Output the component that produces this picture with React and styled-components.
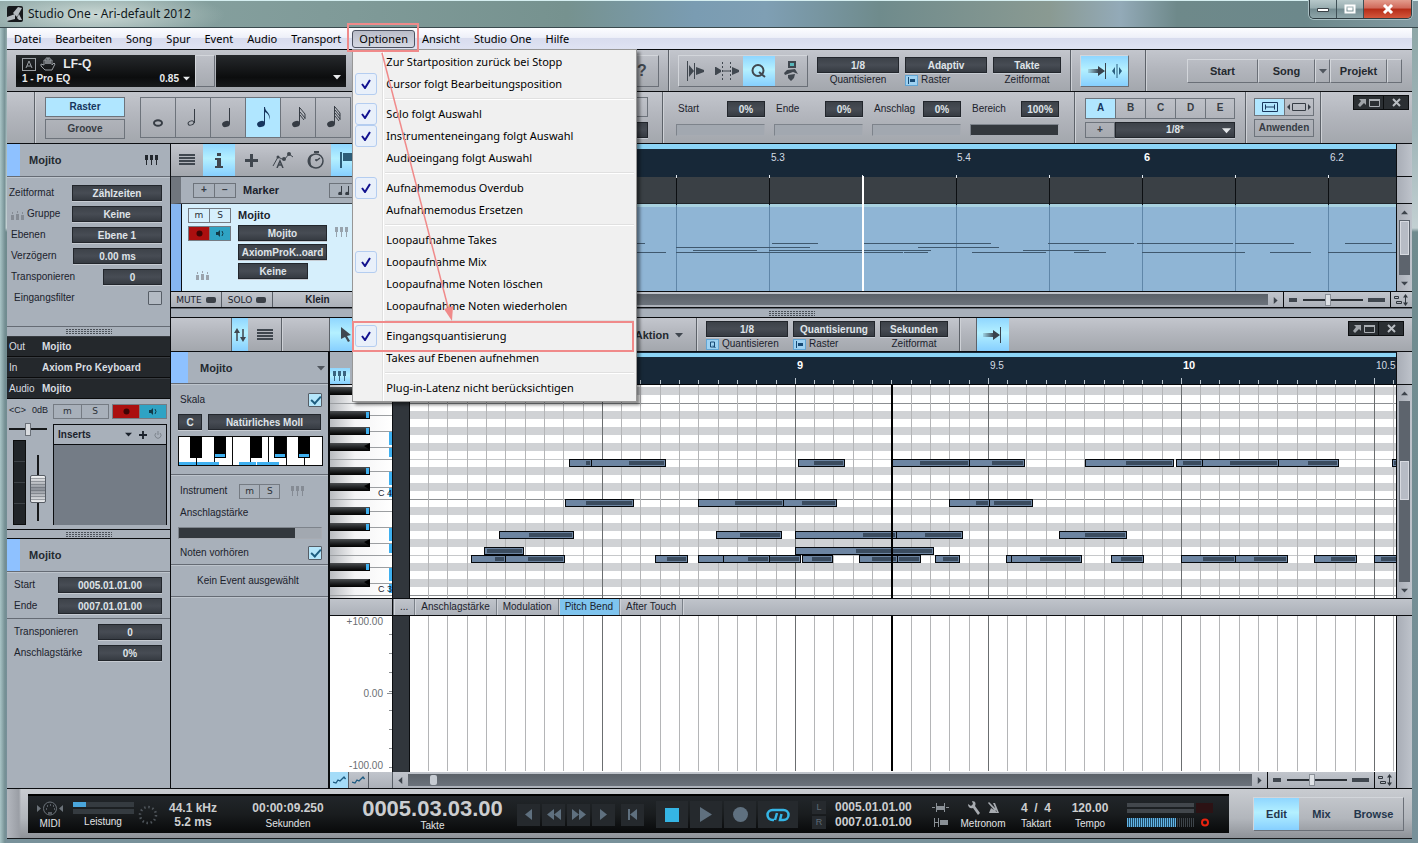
import React, { useState } from "react";
import styled, { createGlobalStyle, css } from "styled-components";

const GlobalStyle = createGlobalStyle`
  * {
    box-sizing: border-box;
  }

  body {
    margin: 0;
    background: #6f8a8e;
    font-family: "Liberation Sans", Arial, sans-serif;
    font-size: 10px;
    line-height: 12px;
    color: #1b222c;
  }

  button, input, select {
    font: inherit;
    color: inherit;
    margin: 0;
    padding: 0;
    border: 0;
    border-radius: 0;
    background: none;
  }

  svg {
    display: block;
    flex: none;
  }
`;

/* ---------- shared looks ---------- */

const metal = css`
  background: linear-gradient(#c3c6cd, #b3b6bd 45%, #a3a7ad);
`;

const raised = css`
  border: 1px solid;
  border-color: #d3d6db #6a6f77 #6a6f77 #d3d6db;
`;

const active = css`
  background: linear-gradient(#8fd6ff, #b4f0ff 45%, #86cfff);
`;

const darkBox = css`
  height: 16px;
  border: 1px solid #22262c;
  background: linear-gradient(#3d4249, #474c54 50%, #363b42);
  box-shadow: 0 1px 0 #c6cbd2;
  color: #dfe3e8;
  font-weight: bold;
  text-align: center;
  text-align-last: center;
`;

/* ---------- window ---------- */

const Window = styled.div`
  min-height: 100vh;
  display: flex;
  flex-direction: column;
  padding: 0 6px 4px 7px;
  border-radius: 6px 6px 0 0;
  background:
    linear-gradient(90deg, #a9c4c6 0, #748f93 5px, transparent 6px),
    linear-gradient(#8aa3a3 0, #9fb5b8 130px, #c3d0d2 228px, #6f8b8e 232px, #78919a 100%);
`;

const TitleBar = styled.header`
  height: 28px;
  display: flex;
  align-items: center;
  gap: 5px;
  margin: 0 -6px 0 -7px;
  padding-left: 7px;
  border-top: 1px solid #d5eef0;
  border-bottom: 1px solid #3a4a4e;
  background:
    radial-gradient(ellipse 130px 26px at 95px 14px, rgba(214, 226, 222, 0.85), transparent),
    linear-gradient(90deg, #8ba5a4 0, #7f9a98 25%, #76928f 40%, #7a9cb2 49%, #7f9fb4 54%, #6f8b8c 62%, #8a9a92 74%, #93aab8 79%, #6e898a 83%, #6c888b 92%, #8199a0 100%);
`;

const WindowTitle = styled.h1`
  margin: 0;
  font: 12px/16px "Noto Sans", "Open Sans", sans-serif;
  color: #10181c;
`;

const CaptionButtons = styled.div`
  display: flex;
  align-self: flex-start;
  margin: -1px 6px 0 auto;
  border: 1px solid #2f3d42;
  border-top: 0;
  border-radius: 0 0 5px 5px;
  overflow: hidden;
  box-shadow: 0 0 0 1px #a9bfc3;
`;

const CaptionButton = styled.button`
  width: ${({ $close }) => ($close ? "47px" : "27px")};
  height: 18px;
  display: flex;
  align-items: center;
  justify-content: center;
  border-right: ${({ $close }) => ($close ? "0" : "1px solid #3f5056")};
  background: ${({ $close }) =>
    $close ? "linear-gradient(#e39c8d, #d0695a 45%, #b52c17 50%, #d4573c)" : "linear-gradient(#b7c8ca, #98adb0 45%, #738b90 50%, #8ea5a9)"};
`;

const MenuBar = styled.nav`
  height: 22px;
  display: flex;
  align-items: center;
  border-bottom: 1px solid #0b0d10;
  background: linear-gradient(#fcfdff, #eef0f9 45%, #d8dcee 50%, #dfe3f3);
`;

const MenuEntry = styled.div`
  position: relative;
  margin-left: ${({ $open }) => ($open ? "4px" : "0")};
`;

const MenuButton = styled.button`
  height: 18px;
  padding: 0 6px;
  border: 1px solid ${({ $open }) => ($open ? "#4c5160" : "transparent")};
  border-radius: 3px;
  background: ${({ $open }) => ($open ? "linear-gradient(#b9bcc8, #d5d8e3)" : "none")};
  font: 11px/15px "Noto Sans", "Open Sans", sans-serif;
  color: #000;
`;

const Highlight = styled.span`
  position: absolute;
  z-index: 7;
  inset: ${({ $inset }) => $inset};
  border: 2px solid #f08a8a;
  pointer-events: none;
`;

const Dropdown = styled.ul`
  position: absolute;
  z-index: 5;
  top: 19px;
  left: 0;
  width: 285px;
  margin: 0;
  padding: 1px 2px 2px;
  list-style: none;
  border: 1px solid #979797;
  background: linear-gradient(90deg, #f1f1f1 29px, #e0e0e0 29px, #e0e0e0 30px, #fff 30px, #fff 31px, #f0f0f0 31px);
  box-shadow: 3px 3px 3px rgba(0, 0, 0, 0.45);
`;

const DropdownRow = styled.li`
  position: relative;
`;

const DropdownItem = styled.button`
  width: 100%;
  height: 22px;
  display: flex;
  align-items: center;
  gap: 9px;
  font: 11px/16px "Noto Sans", "Open Sans", sans-serif;
  color: #000;
  text-align: left;
  white-space: nowrap;
`;

const CheckCell = styled.span`
  width: 22px;
  height: 22px;
  display: flex;
  align-items: center;
  justify-content: center;
  border: 1px solid ${({ $on }) => ($on ? "#b4cdf0" : "transparent")};
  border-radius: 3px;
  background: ${({ $on }) => ($on ? "#e9f0fa" : "none")};
`;

const DropdownRule = styled.li`
  height: 8px;
  margin-left: 30px;
  background: linear-gradient(transparent 3px, #e0e0e0 3px, #e0e0e0 4px, #fff 4px, #fff 5px, transparent 5px);
`;

const Arrow = styled.svg`
  position: absolute;
  z-index: 6;
  top: 3px;
  left: 26px;
  pointer-events: none;
`;

/* ---------- toolbars ---------- */

const Toolbar = styled.div`
  display: flex;
  height: ${({ $height }) => $height};
  border-bottom: 1px solid #0b0d10;
  ${metal}
`;

const Section = styled.div`
  display: flex;
  flex: none;
  align-items: center;
  gap: ${({ $gap }) => $gap || "0"};
  width: ${({ $width }) => $width || "auto"};
  padding: ${({ $padding }) => $padding || "0 9px"};
  border-right: 1px solid #5d6269;
  box-shadow: 1px 0 0 #ced1d6;
  color: #3f464e;
`;

const Push = styled.div`
  display: flex;
  align-items: ${({ $top }) => ($top ? "flex-start" : "center")};
  margin-left: auto;
  padding: ${({ $padding }) => $padding || "0"};
`;

const PluginDisplay = styled.div`
  width: ${({ $width }) => $width};
  height: 32px;
  display: flex;
  flex-direction: column;
  justify-content: space-between;
  padding: 2px 5px 2px 6px;
  background: linear-gradient(#26292c, #0c0d0e 70%, #17191b);
  color: #e8eaec;
  font-weight: bold;
`;

const PluginLine = styled.div`
  display: flex;
  align-items: center;
  gap: 4px;
  height: ${({ $tall }) => ($tall ? "15px" : "12px")};
  font-size: ${({ $tall }) => ($tall ? "12px" : "10px")};
  justify-content: ${({ $spread }) => ($spread ? "space-between" : "flex-start")};
`;

const PluginGap = styled.div`
  width: 20px;
  height: 32px;
  margin-right: 1px;
  ${raised}
`;

const ButtonGroup = styled.div`
  display: flex;
  flex: none;
  margin-right: ${({ $space }) => $space || "0"};
  ${raised}
`;

const ToolButton = styled.button`
  width: ${({ $width }) => $width || "32px"};
  height: ${({ $height }) => $height || "30px"};
  flex: none;
  display: flex;
  align-items: center;
  justify-content: center;
  gap: 4px;
  color: #40474f;
  font-size: 16px;
  font-weight: bold;
  ${({ $on }) => $on && active}
`;

const PageButton = styled.button`
  width: ${({ $width }) => $width};
  height: 24px;
  display: flex;
  align-items: center;
  justify-content: center;
  font-size: 11px;
  font-weight: bold;
  color: #24292f;
  ${raised}

  svg {
    color: #50565e;
  }
`;

const FlatButton = styled.button`
  width: ${({ $width }) => $width};
  height: ${({ $height }) => $height || "20px"};
  display: flex;
  align-items: center;
  justify-content: center;
  border: 1px solid #6d737b;
  margin-right: ${({ $joined }) => ($joined ? "-1px" : "0")};
  font-weight: bold;
  color: ${({ $on }) => ($on ? "#17365e" : "#363c44")};
  background: ${({ $on }) => ($on ? "#b0e6ff" : "transparent")};
`;

const Column = styled.div`
  display: flex;
  flex-direction: column;
  gap: ${({ $gap }) => $gap || "0"};
  padding-top: ${({ $top }) => $top || "0"};
  color: #1b222c;
  ${({ $grow }) => $grow && "flex: 1; min-width: 0;"}
`;

const Row = styled.div`
  display: flex;
  align-items: center;
  gap: ${({ $gap }) => $gap || "0"};
`;

const ValueSelect = styled.select`
  ${darkBox}
  appearance: none;
  width: ${({ $width }) => $width || "90px"};
  line-height: 13px;
`;

const ValueInput = styled.input`
  ${darkBox}
  width: ${({ $width }) => $width};
`;

const SelectWithArrow = styled.div`
  position: relative;
  color: #e4e7ea;

  svg {
    position: absolute;
    top: 4px;
    right: 4px;
    pointer-events: none;
  }
`;

const BoxCaption = styled.label`
  height: 14px;
  display: flex;
  align-items: center;
  justify-content: ${({ $icon }) => ($icon ? "flex-start" : "center")};
  gap: 3px;
`;

const Bar = styled.div`
  width: ${({ $width }) => $width};
  height: 12px;
  border: 1px solid;
  border-color: #7d838b #a7abb2 #a7abb2 #7d838b;
  background: linear-gradient(90deg, #33383d ${({ $fill }) => $fill}, #a2a8b0 ${({ $fill }) => $fill});
`;

const DarkButtons = styled.div`
  display: flex;
  height: 15px;
  border: 1px solid #0c0e10;
  background: #2b2f33;

  button {
    width: 29px;
    display: flex;
    align-items: center;
    justify-content: center;
  }

  button + button {
    width: 25px;
    border-left: 1px solid #0c0e10;
  }
`;

/* ---------- panels ---------- */

const Body = styled.main`
  flex: 1;
  display: flex;
  border-bottom: 1px solid #0b0d10;
  background: #a8b0ba;
`;

const Inspector = styled.aside`
  width: 164px;
  flex: none;
  border-right: 1px solid #0b0d10;
`;

const PanelHead = styled.div`
  height: ${({ $height }) => $height || "33px"};
  display: flex;
  align-items: center;
  padding-right: ${({ $pad }) => $pad || "11px"};
  border-bottom: 1px solid #656b74;
  box-shadow: 0 1px 0 #bdc4cc;
  color: #50565e;

  &::before {
    content: "";
    align-self: stretch;
    width: ${({ $mark }) => $mark || "13px"};
    margin-right: ${({ $mark }) => ($mark ? "12px" : "9px")};
    background: #8ec1ff;
  }

  svg {
    margin-left: auto;
  }
`;

const PanelTitle = styled.h2`
  margin: 0;
  font-size: 11px;
  line-height: 14px;
  color: #23292f;
`;

const FieldList = styled.div`
  display: flex;
  flex-direction: column;
  gap: 5px;
  padding: ${({ $padding }) => $padding};
  border-bottom: ${({ $line }) => ($line ? "1px solid #656b74" : "0")};
`;

const Field = styled.label`
  min-height: 16px;
  display: flex;
  align-items: center;
  justify-content: space-between;
  padding-left: ${({ $indent }) => $indent || "0"};

  span {
    display: flex;
    align-items: flex-end;
    gap: 3px;
  }
`;

const Check = styled.input`
  appearance: none;
  width: 14px;
  height: 14px;
  border: 1px solid #565d66;
  border-radius: 1px;
  background: #b3bac3;

  &:checked {
    background: #b5e6fb;
  }

  &:checked::before {
    content: "";
    display: block;
    width: 8px;
    height: 4px;
    margin: 2px 0 0 2px;
    border: solid #1d5d80;
    border-width: 0 0 2px 2px;
    transform: rotate(-48deg);
  }
`;

const Grip = styled.div`
  height: 10px;
  display: flex;
  align-items: center;
  justify-content: center;
  border-top: 1px solid ${({ $soft }) => ($soft ? "#656b74" : "#0b0d10")};
  border-bottom: ${({ $line }) => ($line ? "1px solid #0b0d10" : "0")};

  &::before {
    content: "";
    width: 47px;
    height: 5px;
    background: conic-gradient(#4b5159 25%, transparent 0) 0 0 / 3px 2px;
  }
`;

const Route = styled.div`
  height: 21px;
  display: flex;
  align-items: center;
  padding-left: 2px;
  border-bottom: 1px solid #0a0b0c;
  border-top: 1px solid #373b40;
  background: #24282c;
  color: #d9dde1;

  span {
    width: 33px;
  }
`;

const Channel = styled.div`
  display: flex;
  gap: 4px;
  height: 130px;
  padding: 5px 3px 4px 2px;
`;

const Strip = styled.div`
  width: 40px;
  font-size: 9px;
  display: flex;
  flex-direction: column;
`;

const StripFader = styled.div`
  flex: 1;
  display: flex;
  justify-content: space-between;
  padding: 2px 1px 0 4px;
`;

const Meter = styled.div`
  width: 13px;
  border: 1px solid #0c0d0e;
  background: repeating-linear-gradient(#202428 0, #202428 20px, #3d4247 20px, #3d4247 21px);
`;

const PanSlider = styled.input`
  appearance: none;
  width: 38px;
  height: 14px;
  margin: 6px 0 2px;
  background: linear-gradient(transparent 6px, #17191b 6px, #17191b 8px, transparent 8px);

  &::-webkit-slider-thumb {
    appearance: none;
    width: 6px;
    height: 13px;
    border: 1px solid #6b7179;
    background: #d9dce0;
  }
`;

const VolumeSlider = styled.input`
  appearance: none;
  writing-mode: vertical-lr;
  direction: rtl;
  width: 16px;
  height: 66px;
  margin: 15px 2px 0 0;
  background: linear-gradient(90deg, transparent 7px, #17191b 7px, #17191b 9px, transparent 9px);

  &::-webkit-slider-thumb {
    appearance: none;
    width: 16px;
    height: 28px;
    border: 1px solid #565c64;
    border-radius: 2px;
    background: repeating-linear-gradient(transparent 0, transparent 2px, rgba(90, 96, 104, 0.5) 2px, rgba(90, 96, 104, 0.5) 3px),
      linear-gradient(#f2f3f4, #8b9098 50%, #e9ebed);
  }
`;

const Inserts = styled.div`
  flex: 1;
  border: 1px solid #0b0d10;
  border-bottom: 0;
  background: #747c86;
`;

const InsertsHead = styled.div`
  height: 20px;
  display: flex;
  align-items: center;
  gap: 7px;
  padding: 0 4px;
  border-bottom: 1px solid #0b0d10;
  background: #a8b0ba;
  font-weight: bold;

  b {
    flex: 1;
  }
`;

const PairButton = styled.button`
  width: ${({ $width }) => $width || "22px"};
  height: 15px;
  display: flex;
  align-items: center;
  justify-content: center;
  border: 1px solid #757b83;
  margin-right: -1px;
  font: 9px/11px "DejaVu Sans", sans-serif;
  color: #2b3036;
  background: ${({ $tone }) => $tone || "transparent"};
`;

/* ---------- arrangement ---------- */

const Workspace = styled.div`
  flex: 1;
  min-width: 0;
  display: flex;
  flex-direction: column;
`;

const Arrange = styled.section`
  display: flex;
  height: 148px;
  border-bottom: 1px solid #0b0d10;
`;

const TrackList = styled.div`
  width: 230px;
  flex: none;
  overflow: hidden;
  border-right: 1px solid #0b0d10;
`;

const TrackTools = styled.div`
  height: 33px;
  display: flex;
  border-bottom: 1px solid #3d434a;
  ${metal}
`;

const MarkerRow = styled.div`
  height: 27px;
  display: flex;
  align-items: center;
  padding-left: 12px;
  border-left: 10px solid #70767e;
  border-bottom: 1px solid #3d434a;

  b {
    width: 86px;
    margin-left: 7px;
    font-size: 11px;
  }
`;

const Track = styled.div`
  height: 88px;
  display: flex;
  gap: 8px;
  padding: 4px 0 0 7px;
  border-left: 10px solid #86b6f2;
  background: #d6effc;
  box-shadow: inset 1px 0 0 #0b0d10;
`;

const TrackName = styled.b`
  font-size: 11px;
  line-height: 14px;
`;

const Lane = styled.div`
  flex: 1;
  min-width: 0;
  overflow: hidden;
`;

const ScrollColumn = styled.div`
  width: 16px;
  flex: none;
  display: flex;
  flex-direction: column;
  border-left: 1px solid #0b0d10;
  background: linear-gradient(90deg, #a8adb6, #bec3cb);
`;

const ScrollCap = styled.div`
  height: ${({ $height }) => $height};
  border-bottom: 1px solid #0b0d10;
`;

const ScrollArrow = styled.button`
  width: 15px;
  height: 16px;
  flex: none;
  display: flex;
  align-items: center;
  justify-content: center;
  color: #3d444c;
`;

const VTrack = styled.div`
  flex: 1;
  margin: 0 2px;
  padding: ${({ $offset }) => $offset || "1px"} 1px 0;
  background: #5d646d;

  &::before {
    content: "";
    display: block;
    height: ${({ $size }) => $size};
    border: 1px solid #d7dae0;
    background: #b7bcc5;
  }
`;

const StatusRow = styled.div`
  height: 16px;
  display: flex;
  align-items: stretch;
  flex: none;
  border-bottom: ${({ $last }) => ($last ? "0" : "1px solid #0b0d10")};
  background: linear-gradient(#c1c5cc, #abb0b8);
`;

const StatusButton = styled.button`
  width: ${({ $width }) => $width};
  display: flex;
  align-items: center;
  justify-content: center;
  gap: 4px;
  border-right: 1px solid #585e66;
  font: ${({ $bold }) => ($bold ? 'bold 10px/12px "Liberation Sans"' : '9px/12px "DejaVu Sans"')}, sans-serif;
  background: ${({ $on }) => ($on ? "#a5dcf8" : "none")};
`;

const Led = styled.i`
  width: 10px;
  height: 6px;
  border-radius: 2px;
  background: #3c4148;
`;

const HTrack = styled.div`
  flex: 1;
  margin: 2px 0;
  padding: 1px 0 1px ${({ $offset }) => $offset || "0"};
  background: linear-gradient(#5b6168, #6b727b);

  &::before {
    content: "";
    display: block;
    width: ${({ $thumb }) => $thumb || "0"};
    height: 100%;
    border-radius: 2px;
    background: #c6cbd2;
  }
`;

const ZoomBox = styled.div`
  width: 108px;
  display: flex;
  align-items: center;
  justify-content: space-between;
  padding: 0 5px;
  border: solid #0b0d10;
  border-width: 0 1px;

  i {
    width: 8px;
    height: 4px;
    background: #40474f;
  }

  i:last-child {
    width: 17px;
  }
`;

const ZoomSlider = styled.input`
  appearance: none;
  width: 60px;
  height: 14px;
  background: linear-gradient(transparent 6px, #2b3036 6px, #2b3036 8px, transparent 8px);

  &::-webkit-slider-thumb {
    appearance: none;
    width: 6px;
    height: 12px;
    border: 1px solid #8a9098;
    background: #dfe2e6;
  }
`;

const RowIcon = styled.div`
  width: ${({ $width }) => $width || "21px"};
  display: flex;
  align-items: center;
  justify-content: center;
`;

/* ---------- editor ---------- */

const Editor = styled.section`
  flex: 1;
  display: flex;
`;

const ScalePanel = styled.div`
  width: 159px;
  flex: none;
  border-right: 2px solid #0b0d10;
`;

const PanelBlock = styled.div`
  display: flex;
  flex-direction: column;
  gap: 6px;
  padding: ${({ $padding }) => $padding};
  border-bottom: 1px solid #656b74;
  box-shadow: 0 1px 0 #bdc4cc;
`;

const EditorGrid = styled.div`
  flex: 1;
  min-width: 0;
  display: flex;
  flex-direction: column;
`;

const EditorRow = styled.div`
  display: flex;
  flex: ${({ $grow }) => ($grow ? "1" : "none")};
  background: ${({ $grow }) => ($grow ? "#fff" : "none")};
`;

const KeyColumn = styled.div`
  width: 63px;
  flex: none;
  display: flex;
  align-items: flex-end;
  border-right: 1px solid #0b0d10;
  border-bottom: ${({ $line }) => ($line ? "1px solid #0b0d10" : "0")};
`;

const DarkStrip = styled.div`
  width: 17px;
  flex: none;
  background: #31363c;
  border-right: 1px solid #0b0d10;
`;

const Scale = styled.div`
  flex: 1;
  align-self: stretch;
  display: flex;
  flex-direction: column;
  justify-content: space-between;
  padding: 0 9px 0 0;
  color: #6b6f73;
  text-align: right;
  background: linear-gradient(#8a8d90, #8a8d90) right 77px / 5px 1px no-repeat,
    repeating-linear-gradient(transparent 0, transparent 18px, #8a8d90 18px, #8a8d90 19px) right top / 3px 100% no-repeat;
`;

const Tabs = styled.div`
  height: 18px;
  display: flex;
  border: solid #0b0d10;
  border-width: 1px 0;
  background: linear-gradient(#c0c4cb, #acb1b9);
`;

const Tab = styled.button`
  padding: 0 6px;
  border-left: 1px solid #7b8189;
  box-shadow: inset 1px 0 0 #cfd2d8;
  background: ${({ $on }) => ($on ? "#7fc4ee" : "none")};
`;

/* ---------- transport ---------- */

const Transport = styled.footer`
  height: 50px;
  display: flex;
  align-items: center;
  padding: 0 8px 0 21px;
  border-bottom: 1px solid #16191c;
  background: linear-gradient(90deg, #b3b7be, #9a9ea5 12px, transparent 14px), linear-gradient(#c9ccd1, #b2b6bc 60%, #8e9298);
`;

const TransportDisplay = styled.div`
  height: 39px;
  flex: none;
  display: grid;
  grid-template-columns: 36px 70px 20px 70px 120px 169px 139px 155px 109px 41px 44px 62px 46px 114px;
  align-items: center;
  padding: 0 2px 0 4px;
  border-top: 2px solid #000;
  background: linear-gradient(#22262a, #191c1e 50%, #08090a);
  color: #e2e4e6;
`;

const Cell = styled.div`
  display: flex;
  flex-direction: column;
  align-items: ${({ $start }) => ($start ? "flex-start" : "center")};
  gap: ${({ $gap }) => $gap || "3px"};
  padding-left: ${({ $start }) => $start || "0"};
`;

const Reading = styled.strong`
  font-size: ${({ $size }) => $size || "12px"};
  line-height: ${({ $size }) => ($size ? "20px" : "14px")};
  color: #ccced0;
  white-space: nowrap;
`;

const Caption = styled.span`
  line-height: 11px;
`;

const Load = styled.div`
  width: 61px;
  height: 5px;
  background: linear-gradient(90deg, #4aa6dc ${({ $fill }) => $fill}, #353b40 ${({ $fill }) => $fill});
`;

const TransportButtons = styled.div`
  display: flex;
  gap: 2px;
`;

const TransportButton = styled.button`
  width: ${({ $width }) => $width || "23px"};
  height: ${({ $width }) => ($width ? "27px" : "22px")};
  margin-left: ${({ $apart }) => ($apart ? "4px" : "0")};
  display: flex;
  align-items: center;
  justify-content: center;
  background: #25292d;
  color: ${({ $on }) => ($on ? "#35b5e5" : "#5f707f")};
`;

const LocatorMark = styled.span`
  width: 14px;
  height: 13px;
  text-align: center;
  background: #262a2e;
  color: #5f6b76;
  font-size: 9px;
`;

const ViewButton = styled.button`
  width: ${({ $width }) => $width};
  height: 32px;
  font-size: 11px;
  font-weight: bold;
  color: #24364c;
  ${({ $on }) => $on && active}
`;

/* ---------- icons ---------- */

const Svg = ({ w, h = w, children, ...rest }) => (
  <svg width={w} height={h} viewBox={`0 0 ${w} ${h}`} fill="currentColor" aria-hidden="true" {...rest}>
    {children}
  </svg>
);

const Triangle = ({ dir = "down", size = 8 }) => {
  const turn = { down: 0, left: 90, up: 180, right: 270 }[dir];
  return (
    <Svg w={size}>
      <path d={`M0 ${size / 4}H${size}L${size / 2} ${size * 0.8}z`} transform={`rotate(${turn} ${size / 2} ${size / 2})`} />
    </Svg>
  );
};

const KeysIcon = ({ color = "#23282e" }) => (
  <Svg w={14} h={11} color={color}>
    <path d="M0 0h3v5h-1v5h-1v-5h-1zM5 0h3v5h-1v5h-1v-5h-1zM10 0h3v5h-1v5h-1v-5h-1z" />
  </Svg>
);

const GroupIcon = ({ color = "#858b94" }) => (
  <Svg w={13} h={9} color={color}>
    <path d="M0 4h3v5H0zM5 3h3v6H5zM10 4h3v5h-3zM1 1h1v2H1zM6 0h1v2H6zM11 1h1v2h-1z" />
  </Svg>
);

const ListIcon = () => (
  <Svg w={16} h={12}>
    <path d="M0 0h16v2H0zM0 3h16v2H0zM0 6h16v2H0zM0 9h16v2H0z" />
  </Svg>
);

const PlusIcon = ({ size = 13 }) => (
  <Svg w={size} viewBox="0 0 13 13">
    <path d="M5 0h3v5h5v3H8v5H5V8H0V5h5z" />
  </Svg>
);

const SpeakerIcon = () => (
  <Svg w={11} h={9} color="#123a48">
    <path d="M1 3h2l2-2v7L3 6H1z" />
    <path d="M7 2q2 2.500 0 5" fill="none" stroke="currentColor" />
  </Svg>
);

const RecordDot = ({ color = "#3e0505" }) => (
  <Svg w={7} color={color}>
    <circle cx="3.500" cy="3.500" r="3" />
  </Svg>
);

const SnapArrow = () => (
  <Svg w={20} h={18} color="#39424c">
    <defs>
      <linearGradient id="fade">
        <stop offset="0" stopColor="#39424c" stopOpacity="0.15" />
        <stop offset="1" stopColor="#39424c" />
      </linearGradient>
    </defs>
    <rect x="0" y="7" width="11" height="4" fill="url(#fade)" />
    <path d="M10 4l7 5-7 5zM17 1h1v16h-1z" />
  </Svg>
);

const SplitIcon = () => (
  <Svg w={10} h={16} color="#2b5f80">
    <path d="M4.500 1h1v14h-1zM0 8l3-4v8zM10 8L7 4v8z" />
  </Svg>
);

const SnapIcon = ({ q }) => (
  <Svg w={13} h={11}>
    <rect width="13" height="11" fill="#62a5d4" />
    <rect x="1" y="1" width="11" height="9" fill="#9fd2f2" />
    {q ? (
      <path d="M4.500 3h4v5h-4zM7 6.500l2.500 2.500" fill="none" stroke="#184a74" />
    ) : (
      <path d="M3 2h1v7H3zM5 4h5v3H5z" fill="#184a74" />
    )}
  </Svg>
);

const noteShapes = [
  <ellipse key="a" cx="9" cy="20" rx="4" ry="2.800" fill="none" stroke="currentColor" strokeWidth="2" />,
  <g key="b">
    <ellipse cx="7" cy="20" rx="3" ry="2" fill="none" stroke="currentColor" transform="rotate(-20 7 20)" />
    <path d="M10 6h1v14h-1z" />
  </g>,
  <g key="c">
    <ellipse cx="7" cy="21" rx="4" ry="3" transform="rotate(-20 7 21)" />
    <path d="M10 5h1v16h-1z" />
  </g>,
  <g key="d">
    <ellipse cx="7" cy="21" rx="4" ry="3" transform="rotate(-20 7 21)" />
    <path d="M10 4h1c0 5 7 6 4 13 1-5-2-7-4-8v12h-1z" />
  </g>,
  <g key="e">
    <ellipse cx="7" cy="21" rx="4" ry="3" transform="rotate(-20 7 21)" />
    <path d="M10 4h1v17h-1z" />
    <path d="M11 5l5 6v5M11 9l5 6M11 12l4 5" fill="none" stroke="currentColor" />
  </g>,
  <g key="f">
    <ellipse cx="7" cy="21" rx="4" ry="3" transform="rotate(-20 7 21)" />
    <path d="M10 3h1v18h-1z" />
    <path d="M11 4l5 6v7M11 7l5 6M11 10l5 6M11 13l4 5" fill="none" stroke="currentColor" />
  </g>,
];

const noteNames = ["1/1", "1/2", "1/4", "1/8", "1/16", "1/32"];

const LayersIcon = () => (
  <Svg w={15} h={12} color="#30363d">
    <path d="M.5 2.500h4v2h-4zM2.500 7.500h5v2h-5z" fill="none" stroke="currentColor" />
    <path d="M11 3h1v6h-1zM11.500 0l2.500 3.500H9zM11.500 12L9 8.500h5z" />
  </Svg>
);

const CurveIcon = () => (
  <Svg w={13} h={8}>
    <path d="M0 6l3 1 2-3 2 1 4-4 1.500 2" fill="none" stroke="#1d5a80" strokeWidth="1.300" />
  </Svg>
);

/* ---------- data ---------- */

const menus = ["Datei", "Bearbeiten", "Song", "Spur", "Event", "Audio", "Transport", "Optionen", "Ansicht", "Studio One", "Hilfe"];

const optionGroups = [
  [["Zur Startposition zurück bei Stopp"], ["Cursor folgt Bearbeitungsposition", true]],
  [["Solo folgt Auswahl", true], ["Instrumenteneingang folgt Auswahl", true], ["Audioeingang folgt Auswahl"]],
  [["Aufnahmemodus Overdub", true], ["Aufnahmemodus Ersetzen"]],
  [["Loopaufnahme Takes"], ["Loopaufnahme Mix", true], ["Loopaufnahme Noten löschen"], ["Loopaufnahme Noten wiederholen"]],
  [["Eingangsquantisierung", true], ["Takes auf Ebenen aufnehmen"]],
  [["Plug-in-Latenz nicht berücksichtigen"]],
];

// x of the first visible pixel of the two time axes
const ARRANGE_START = 401;
const ROLL_START = 410;

const arrangeNotes = {
  99: [[600, 645], [772, 818], [863, 991], [1048, 1134], [1137, 1233], [1235, 1294], [1345, 1392]],
  103: [[676, 810], [918, 999]],
  106: [[693, 757], [769, 931], [1023, 1089]],
  108: [[600, 666], [676, 903], [904, 928], [972, 1046], [1074, 1106], [1142, 1245], [1270, 1311], [1328, 1396]],
};

const arrangeLabels = [["5.3", 771], ["5.4", 957], ["6", 1144, true], ["6.2", 1330]];

// row top: [start, end, where the dark velocity bar begins]
const rollNotes = {
  74: [
    [569, 592, 586], [591, 666, 629], [798, 845, 814], [892, 970, 920], [969, 1025, 992], [1085, 1174, 1126],
    [1176, 1203, 1183], [1202, 1279, 1230], [1278, 1339, 1308], [1392, 1400, 1394],
  ],
  114: [[565, 634, 586], [698, 784, 735], [783, 837, 802], [949, 990, 976], [989, 1033, 994]],
  146: [[499, 574, 529], [716, 782, 740], [795, 897, 863], [896, 963, 925], [1059, 1127, 1085]],
  162: [[484, 524, 487], [795, 934, 856]],
  170: [
    [471, 506, 495], [505, 565, 528], [655, 688, 667], [698, 724, 724], [723, 770, 748], [769, 801, 770], [802, 833, 812],
    [859, 898, 872], [897, 921, 899], [935, 960, 943], [1006, 1012, 1012], [1011, 1082, 1040], [1111, 1144, 1121],
    [1181, 1236, 1203], [1235, 1288, 1254], [1314, 1357, 1331], [1374, 1400, 1381],
  ],
};

const C_ROWS = [18, 114, 210, 306];
const blackOffsets = [-16, -32, -56, -72, -88];

/* ---------- pieces ---------- */

const Labelled = ({ id, caption, value, width, icon }) => (
  <Column $top="3px">
    <ValueSelect id={id} $width={width}>
      <option>{value}</option>
    </ValueSelect>
    <BoxCaption htmlFor={id} $icon={!!icon}>
      {icon}
      {caption}
    </BoxCaption>
  </Column>
);

const WindowControls = () => (
  <DarkButtons>
    <button aria-label="Fenster lösen">
      <Svg w={24} h={10} color="#a9adb2">
        <path d="M2 1h7v6L7 5 3 9 1 7l3-4z" fill="#a0a4a9" />
        <path d="M12.500 1.500h10v7h-10z" fill="none" stroke="currentColor" />
        <path d="M12 1h11v2H12z" />
      </Svg>
    </button>
    <button aria-label="Schließen">
      <Svg w={9}>
        <path d="M1 1l7 7M8 1l-7 7" stroke="#b9bdc2" strokeWidth="2" />
      </Svg>
    </button>
  </DarkButtons>
);

const Zoom = ({ value }) => (
  <ZoomBox>
    <i />
    <ZoomSlider type="range" aria-label="Zoom" defaultValue={value} />
    <i />
  </ZoomBox>
);

const Timeline = () => {
  const lines = Array.from({ length: 24 }, (_, i) => Math.round(303.5 + i * 93.15));
  return (
    <svg width="100%" height="147" shapeRendering="crispEdges" fontFamily="Liberation Sans, Arial, sans-serif">
      <rect width="100%" height="147" fill="#8fb5d5" />
      <rect width="100%" height="33" fill="#172838" />
      <rect width="100%" height="5" fill="#8cd4f6" />
      <rect y="33" width="100%" height="27" fill="#3a4045" />
      <rect y="59" width="100%" height="1" fill="#20262b" />
      <rect y="60" width="100%" height="3" fill="#a9d2e0" />
      {lines.map((x) => {
        const left = x - ARRANGE_START;
        return (
          <g key={x}>
            <rect x={left} y="31" width="1" height="3" fill="#e6eef4" />
            <rect x={left} y="34" width="1" height="27" fill="#0c0f12" />
            <rect x={left} y="61" width="1" height="86" fill="#5f86a8" />
          </g>
        );
      })}
      {Object.entries(arrangeNotes).map(([y, notes]) =>
        notes.map(([a, b]) => <rect key={a + y} x={a - ARRANGE_START} y={y} width={b - a} height="1" fill="#3f586e" />)
      )}
      <rect x={862 - ARRANGE_START} y="32" width="2" height="115" fill="#fff" />
      {arrangeLabels.map(([text, x, bold]) => (
        <text key={text} x={x - ARRANGE_START} y="17" fill={bold ? "#fff" : "#d5dde4"} fontSize={bold ? 11 : 10} fontWeight={bold ? "bold" : "normal"}>
          {text}
        </text>
      ))}
    </svg>
  );
};

const gridLines = Array.from({ length: 110 }, (_, i) => ({ x: Math.floor(428.6 + i * 19.3) - ROLL_START, bar: i % 10 === 9 }));

const rulerLabels = [["9", 797, true], ["9.5", 990], ["10", 1183, true], ["10.5", 1376]];

const RollRuler = () => (
  <svg width="100%" height="33" shapeRendering="crispEdges" fontFamily="Liberation Sans, Arial, sans-serif">
    <rect width="100%" height="33" fill="#172838" />
    <rect y="1" width="100%" height="4" fill="#8cd4f6" />
    <rect y="32" width="100%" height="1" fill="#05070a" />
    {gridLines.map(({ x, bar }) => (
      <rect key={x} x={x} y={bar ? 26 : 28} width="1" height={bar ? 6 : 4} fill="#b9c4cc" />
    ))}
    {rulerLabels.map(([text, x, bold]) => (
      <text key={text} x={x - ROLL_START} y="17" fill={bold ? "#fff" : "#d5dde4"} fontSize={bold ? 11 : 10} fontWeight={bold ? "bold" : "normal"}>
        {text}
      </text>
    ))}
  </svg>
);

const GridLines = ({ height }) => (
  <>
    {gridLines.map(({ x, bar }) => (
      <rect key={x} x={x} width="1" height={height} fill={bar ? "#6b6e70" : "#b4b5b7"} />
    ))}
  </>
);

const PianoRoll = () => (
  <svg width="100%" height="213" shapeRendering="crispEdges">
    <rect width="100%" height="213" fill="#fff" />
    {C_ROWS.map((c) => blackOffsets.map((o) => <rect key={c + o} y={c + o} width="100%" height="8" fill="#d0d2d5" />))}
    {C_ROWS.map((c) => (
      <g key={c}>
        <rect y={c} width="100%" height="1" fill="#8c8f92" />
        <rect y={c - 40} width="100%" height="1" fill="#c6c8ca" />
      </g>
    ))}
    <GridLines height="213" />
    {Object.entries(rollNotes).map(([y, notes]) =>
      notes.map(([a, b, v]) => (
        <g key={a + y}>
          <rect x={a - ROLL_START} y={y} width={b - a} height="8" fill="#05080c" />
          <rect x={a - ROLL_START + 1} y={+y + 1} width={b - a - 2} height="6" fill="#6d85a2" />
          {b - v > 2 && <rect x={v - ROLL_START} y={+y + 2} width={b - v - 2} height="4" fill="#3b4c5f" />}
        </g>
      ))
    )}
    <rect x={891 - ROLL_START} width="2" height="213" fill="#000" />
  </svg>
);

const Keyboard = () => (
  <svg width="62" height="213" shapeRendering="crispEdges" fontFamily="Liberation Sans, Arial, sans-serif">
    <defs>
      <linearGradient id="ivory">
        <stop offset="0" stopColor="#b9bcc0" />
        <stop offset="0.4" stopColor="#f4f4f5" />
        <stop offset="1" stopColor="#fff" />
      </linearGradient>
      <linearGradient id="ebony" x2="0" y2="1">
        <stop offset="0" stopColor="#4b4e51" />
        <stop offset="0.5" stopColor="#222426" />
        <stop offset="1" stopColor="#000" />
      </linearGradient>
    </defs>
    <rect width="62" height="213" fill="url(#ivory)" />
    {C_ROWS.map((c) => (
      <g key={c}>
        <rect y={c} width="62" height="1" fill="#9b9ea1" />
        <rect y={c - 40} width="62" height="1" fill="#9b9ea1" />
        {[-67, -51, -27, -11].map((y) => (
          <rect key={y} x="59" y={c + y} width="3" height={y === -51 || y === -11 ? 9 : 13} fill="#3fb0f0" />
        ))}
        {blackOffsets.map((o, i) => (
          <g key={o}>
            <rect y={c + o + 4} width="62" height="1" fill="#9b9ea1" />
            <rect y={c + o} width="40" height="8" fill="url(#ebony)" />
            {i !== 0 && i !== 2 ? (
              <rect x="36" y={c + o + 1} width="3" height="6" fill="#3fb0f0" />
            ) : (
              <path d={`M40 ${c + o}v7l-6-4z`} fill="#000" shapeRendering="auto" />
            )}
          </g>
        ))}
      </g>
    ))}
    <text x="48" y="111" fontSize="9" fill="#1b222c">C 4</text>
    <text x="48" y="207" fontSize="9" fill="#1b222c">C 3</text>
  </svg>
);

const ScaleKeys = () => (
  <svg width="145" height="30" shapeRendering="crispEdges">
    <rect width="145" height="30" fill="#0a0a0a" />
    {[0, 1, 2, 3, 4, 5, 6, 7].map((i) => (
      <rect key={i} x={1 + i * 18} y="1" width={17} height="28" fill="#fff" />
    ))}
    {[1, 19, 61, 79].map((x, i) => (
      <rect key={x} x={x} y="26" width={i % 2 ? 22 : 17} height="3" fill="#3fb0f0" />
    ))}
    {[12, 36, 72, 96, 120].map((x, i) => (
      <g key={x}>
        <rect x={x} y="0" width="12" height="22" fill="#000" />
        {i !== 0 && i !== 2 && <rect x={x + 1} y="18" width="10" height="3" fill="#3fb0f0" />}
      </g>
    ))}
  </svg>
);

const Automation = () => (
  <svg width="100%" height="155" shapeRendering="crispEdges">
    <rect width="100%" height="155" fill="#fff" />
    <GridLines height="155" />
    <rect x={891 - ROLL_START} width="2" height="155" fill="#000" />
  </svg>
);

const OptionsMenu = () => {
  const [on, setOn] = useState(() => new Set(optionGroups.flat().filter((o) => o[1]).map((o) => o[0])));

  const toggle = (name) => {
    const next = new Set(on);
    if (!next.delete(name)) next.add(name);
    setOn(next);
  };

  return (
    <>
      <Dropdown role="menu">
        {optionGroups.map((group, i) => (
          <React.Fragment key={i}>
            {i > 0 && <DropdownRule role="separator" />}
            {group.map(([name]) => (
              <DropdownRow key={name} role="none">
                <DropdownItem role="menuitemcheckbox" aria-checked={on.has(name)} onClick={() => toggle(name)}>
                  <CheckCell $on={on.has(name)}>
                    {on.has(name) && (
                      <Svg w={10}>
                        <path d="M1 5l3 4 5-8" fill="none" stroke="#12128f" strokeWidth="2" />
                      </Svg>
                    )}
                  </CheckCell>
                  {name}
                </DropdownItem>
                {name === "Eingangsquantisierung" && <Highlight $inset="-4px 0 -5px -3px" />}
              </DropdownRow>
            ))}
          </React.Fragment>
        ))}
      </Dropdown>
      <Arrow width="80" height="290">
        <path d="M4 20L71 278" stroke="#f08a8a" strokeWidth="1.500" />
        <path d="M66 276l9-3-1 15z" fill="#f08a8a" />
      </Arrow>
    </>
  );
};

const InspectorPanel = () => (
  <Inspector>
    <PanelHead>
      <PanelTitle>Mojito</PanelTitle>
      <KeysIcon />
    </PanelHead>
    <FieldList $padding="8px 8px 20px 2px">
      <Field>
        Zeitformat
        <ValueSelect><option>Zählzeiten</option></ValueSelect>
      </Field>
      <Field $indent="2px">
        <span><GroupIcon />Gruppe</span>
        <ValueSelect><option>Keine</option></ValueSelect>
      </Field>
      <Field $indent="2px">
        Ebenen
        <ValueSelect><option>Ebene 1</option></ValueSelect>
      </Field>
      <Field $indent="2px">
        Verzögern
        <ValueInput $width="89px" defaultValue="0.00 ms" />
      </Field>
      <Field $indent="2px">
        Transponieren
        <ValueInput $width="59px" defaultValue="0" />
      </Field>
      <Field $indent="5px">
        Eingangsfilter
        <Check type="checkbox" />
      </Field>
    </FieldList>
    <Grip $soft />
    <Route><span>Out</span><b>Mojito</b></Route>
    <Route><span>In</span><b>Axiom Pro Keyboard</b></Route>
    <Route><span>Audio</span><b>Mojito</b></Route>
    <Channel>
      <Strip>
        <Row $gap="6px">
          <span>&lt;C&gt;</span>
          <span>0dB</span>
        </Row>
        <PanSlider type="range" aria-label="Panorama" />
        <StripFader>
          <Meter />
          <VolumeSlider type="range" aria-label="Lautstärke" defaultValue="48" />
        </StripFader>
      </Strip>
      <Column $grow $gap="5px">
        <Row $gap="4px">
          <Row>
            <PairButton $width="29px">m</PairButton>
            <PairButton $width="28px">S</PairButton>
          </Row>
          <Row>
            <PairButton $width="28px" $tone="#ab0f0f" aria-label="Aufnahme"><RecordDot /></PairButton>
            <PairButton $width="28px" $tone="#2fa3c4" aria-label="Monitor"><SpeakerIcon /></PairButton>
          </Row>
        </Row>
        <Inserts>
          <InsertsHead>
            <b>Inserts</b>
            <Triangle size={7} />
            <PlusIcon size={8} />
            <Svg w={8} color="#7c838c">
              <path d="M2 2a3 3 0 1 0 4 0M4 0v4" fill="none" stroke="currentColor" />
            </Svg>
          </InsertsHead>
        </Inserts>
      </Column>
    </Channel>
    <Grip $line />
    <PanelHead>
      <PanelTitle>Mojito</PanelTitle>
    </PanelHead>
    <FieldList $padding="5px 8px 4px 7px" $line>
      <Field>
        Start
        <ValueInput $width="104px" defaultValue="0005.01.01.00" />
      </Field>
      <Field>
        Ende
        <ValueInput $width="104px" defaultValue="0007.01.01.00" />
      </Field>
    </FieldList>
    <FieldList $padding="5px 8px 4px 7px">
      <Field>
        Transponieren
        <ValueInput $width="64px" defaultValue="0" />
      </Field>
      <Field>
        Anschlagstärke
        <ValueInput $width="64px" defaultValue="0%" />
      </Field>
    </FieldList>
  </Inspector>
);

const TrackPanel = () => (
  <TrackList>
    <TrackTools>
      <ToolButton $height="32px" aria-label="Spurliste"><ListIcon /></ToolButton>
      <ToolButton $height="32px" $on aria-label="Inspektor">
        <Svg w={10} h={15}>
          <path d="M3 0h4v3H3zM1 5h6v8h2v2H1v-2h2V7H1z" />
        </Svg>
      </ToolButton>
      <ToolButton $height="32px" aria-label="Spur hinzufügen"><PlusIcon /></ToolButton>
      <ToolButton $height="32px" aria-label="Automation">
        <Svg w={22} h={16}>
          <path d="M1 14l5-9 6 3 5-6 4 3" fill="none" stroke="currentColor" />
          <circle cx="6" cy="5" r="1.500" /><circle cx="12" cy="7" r="2" /><circle cx="17" cy="2" r="2" />
          <path d="M5 16l3-7 3 7M6 13h4" fill="none" stroke="currentColor" strokeWidth="1.500" />
        </Svg>
      </ToolButton>
      <ToolButton $height="32px" aria-label="Zeitbasis">
        <Svg w={18}>
          <circle cx="10" cy="10" r="7" fill="none" stroke="currentColor" strokeWidth="1.500" />
          <path d="M8 0h5v2H8zM6 3C0 6 0 14 6 17c-2-4-2-10 0-14z" />
          <path d="M10 10l4-3M10 10v-2" fill="none" stroke="currentColor" strokeWidth="1.500" />
        </Svg>
      </ToolButton>
      <ToolButton $height="32px" $on aria-label="Marker">
        <Svg w={16} h={18} color="#2d5d78">
          <path d="M1 1h2v16H1zM4 2h11v8H4z" />
        </Svg>
      </ToolButton>
    </TrackTools>
    <MarkerRow>
      <FlatButton $width="22px" $height="15px" $joined>+</FlatButton>
      <FlatButton $width="22px" $height="15px">−</FlatButton>
      <b>Marker</b>
      <FlatButton $width="30px" $height="15px" aria-label="Zählzeiten">
        <Svg w={14} h={9}>
          <path d="M4 0h1v7a2 2 0 1 1-1-1zM11 0h1v7a2 2 0 1 1-1-1z" />
        </Svg>
      </FlatButton>
    </MarkerRow>
    <Track>
      <Column $gap="3px">
        <Row>
          <PairButton>m</PairButton>
          <PairButton>S</PairButton>
        </Row>
        <Row>
          <PairButton $tone="#ab0f0f" aria-label="Aufnahme"><RecordDot /></PairButton>
          <PairButton $tone="#2fa3c4" aria-label="Monitor"><SpeakerIcon /></PairButton>
        </Row>
        <Column $top="27px">
          <RowIcon $width="28px"><GroupIcon color="#9aa4ae" /></RowIcon>
        </Column>
      </Column>
      <Column $gap="3px">
        <TrackName>Mojito</TrackName>
        <ValueSelect $width="89px" aria-label="Instrument"><option>Mojito</option></ValueSelect>
        <ValueSelect $width="89px" aria-label="Eingang"><option>AxiomProK..oard</option></ValueSelect>
        <ValueSelect $width="70px" aria-label="Gruppe"><option>Keine</option></ValueSelect>
      </Column>
      <Column $top="19px">
        <KeysIcon color="#98a3ad" />
      </Column>
    </Track>
  </TrackList>
);

const MainToolbar = () => (
  <Toolbar $height="42px">
    <Section $width="662px">
      <PluginDisplay $width="179px">
        <PluginLine $tall>
          <Svg w={14} h={13} color="#9a9fa4">
            <rect x=".5" y=".5" width="13" height="12" fill="none" stroke="currentColor" />
            <path d="M4 10l3-7 3 7M5 8h4" fill="none" stroke="currentColor" />
          </Svg>
          <Svg w={16} h={14} color="#9a9fa4">
            <path d="M5 13L1 9V7l3 1V3h2v4V1h2v6V1h2v6V3h2v5l2-2 1 1-3 6z" fill="none" stroke="currentColor" />
          </Svg>
          &nbsp;LF-Q
        </PluginLine>
        <PluginLine $spread>
          <span>1 - Pro EQ</span>
          <PluginLine>0.85<Triangle size={7} /></PluginLine>
        </PluginLine>
      </PluginDisplay>
      <PluginGap />
      <PluginDisplay $width="130px">
        <Push $padding="16px 0 0"><Triangle /></Push>
      </PluginDisplay>
      <Push>
        <ButtonGroup>
          <ToolButton>?</ToolButton>
        </ButtonGroup>
      </Push>
    </Section>
    <Section $gap="6px">
      <ButtonGroup $space="3px">
        <ToolButton aria-label="Transienten">
          <Svg w={20}>
            <path d="M2 0h1v20H2zM9 2h1v16H9zM4 4l5 6-5 6zM11 6l8 3v2l-8 3z" />
          </Svg>
        </ToolButton>
        <ToolButton aria-label="Ripple">
          <Svg w={26} h={20}>
            <path d="M1 6h1l5 3v2l-5 3H1zM18 6l7 3v2l-7 3z" />
            <path d="M8.500 1v18M16.500 1v18" stroke="currentColor" strokeDasharray="2 2" />
            <path d="M9 10h7" stroke="currentColor" />
          </Svg>
        </ToolButton>
        <ToolButton $on aria-label="Quantisieren">
          <Svg w={16}>
            <circle cx="7" cy="7.500" r="5.500" fill="none" stroke="currentColor" strokeWidth="2" />
            <path d="M8 9l6 5" stroke="currentColor" strokeWidth="2" />
          </Svg>
        </ToolButton>
        <ToolButton aria-label="Makros">
          <Svg w={16} h={20}>
            <path d="M5 0h8v7H5z" />
            <path d="M7 2h4v3H7z" fill="#59b7bb" />
            <path d="M4 9l8-1 3 5-5-2-8 3-1-2zM5 14l7-1-1 4-3 3-3-3z" />
          </Svg>
        </ToolButton>
      </ButtonGroup>
      <Labelled id="quant" value="1/8" caption="Quantisieren" width="82px" />
      <Labelled id="grid" value="Adaptiv" caption="Raster" width="82px" icon={<SnapIcon />} />
      <Labelled id="time" value="Takte" caption="Zeitformat" width="68px" />
    </Section>
    <Section $width="75px">
      <ButtonGroup>
        <ToolButton $on $width="47px" aria-label="Bildlauf"><SnapArrow /><SplitIcon /></ToolButton>
      </ButtonGroup>
    </Section>
    <Push $padding="0 10px 0 0">
      <PageButton $width="71px">Start</PageButton>
      <PageButton $width="57px">Song</PageButton>
      <PageButton $width="15px" aria-label="Songs"><Triangle /></PageButton>
      <PageButton $width="57px">Projekt</PageButton>
      <PageButton $width="15px" aria-label="Projekte" />
    </Push>
  </Toolbar>
);

const params = [["Start", "0%"], ["Ende", "0%"], ["Anschlag", "0%"], ["Bereich", "100%"]];

const QuantizeToolbar = () => (
  <Toolbar $height="52px">
    <Section $width="28px" />
    <Section $width="628px" $gap="15px" $padding="0 14px 0 10px">
      <Column $gap="2px">
        <FlatButton $width="80px" $on>Raster</FlatButton>
        <FlatButton $width="80px">Groove</FlatButton>
      </Column>
      <Row>
        {noteShapes.map((shape, i) => (
          <FlatButton key={i} $width="36px" $height="41px" $joined $on={i === 3} aria-label={noteNames[i]}>
            <Svg w={18} h={30}>{shape}</Svg>
          </FlatButton>
        ))}
      </Row>
      <Push>
        <Column $gap="5px">
          <FlatButton $width="42px" aria-label="Swing" />
          <ValueSelect $width="42px" aria-label="Swing-Stärke"><option /></ValueSelect>
        </Column>
      </Push>
    </Section>
    <Section $gap="9px" $padding="0 15px 0 13px">
      {params.map(([name, value]) => (
        <Column key={name} $gap="7px" $top="2px">
          <Field $indent="2px">
            {name}
            <ValueInput $width="38px" defaultValue={value} />
          </Field>
          <Bar $width="89px" $fill={value} />
        </Column>
      ))}
    </Section>
    <Section $padding="0 10px">
      <Column $gap="3px">
        <Row>
          {["A", "B", "C", "D", "E"].map((name) => (
            <FlatButton key={name} $width={name === "E" ? "30px" : "31px"} $height="21px" $joined={name !== "E"} $on={name === "A"}>
              {name}
            </FlatButton>
          ))}
        </Row>
        <Row>
          <FlatButton $width="30px" $height="16px">+</FlatButton>
          <SelectWithArrow>
            <ValueSelect $width="120px" aria-label="Preset"><option>1/8*</option></ValueSelect>
            <Triangle size={9} />
          </SelectWithArrow>
        </Row>
      </Column>
    </Section>
    <Section $padding="0 6px 0 8px">
      <Column $gap="3px">
        <Row>
          <FlatButton $width="31px" $height="18px" $joined $on aria-label="Im Bereich">
            <Svg w={16} h={10}>
              <path d="M.5 .5h15v9H.5zM3.500 2.500v5M12.500 2.500v5M4 5h8" fill="none" stroke="currentColor" />
            </Svg>
          </FlatButton>
          <FlatButton $width="30px" $height="18px" aria-label="Außerhalb">
            <Svg w={24} h={10}>
              <path d="M5.500 1.500h13v7h-13z" fill="none" stroke="currentColor" />
              <path d="M0 5l3-3v6zM24 5l-3-3v6z" />
            </Svg>
          </FlatButton>
        </Row>
        <FlatButton $width="60px" $height="18px">Anwenden</FlatButton>
      </Column>
    </Section>
    <Push $top $padding="3px 3px 0">
      <WindowControls />
    </Push>
  </Toolbar>
);

const EditorToolbar = () => (
  <Toolbar $height="34px">
    <Section $width="61px" />
    <ToolButton $on $width="16px" $height="33px" aria-label="Stimmen">
      <Svg w={12} h={14}>
        <path d="M3 13V3M9 1v10" stroke="currentColor" strokeWidth="1.500" />
        <path d="M0 5l3-5 3 5zM6 9l3 5 3-5z" />
      </Svg>
    </ToolButton>
    <Section $width="34px"><ListIcon /></Section>
    <Section $width="48px" />
    <ToolButton $on $height="33px" aria-label="Zeiger">
      <Svg w={12} h={16}>
        <path d="M1 0l10 8-4 1 3 5-2 1-3-5-4 2z" />
      </Svg>
    </ToolButton>
    <Section $width="335px" $padding="0 13px" $gap="6px">
      <Push>
        <PanelTitle>Aktion</PanelTitle>
      </Push>
      <Triangle />
    </Section>
    <Section $gap="5px" $padding="0 11px 0 9px">
      <Labelled id="quant2" value="1/8" caption="Quantisieren" width="82px" icon={<SnapIcon q />} />
      <Labelled id="grid2" value="Quantisierung" caption="Raster" width="82px" icon={<SnapIcon />} />
      <Labelled id="time2" value="Sekunden" caption="Zeitformat" width="68px" />
    </Section>
    <Section $width="17px" $padding="0" />
    <ToolButton $on $height="33px" aria-label="Bildlauf"><SnapArrow /></ToolButton>
    <Push $top $padding="3px 8px 0">
      <WindowControls />
    </Push>
  </Toolbar>
);

const ScaleSettings = () => (
  <ScalePanel>
    <PanelHead $height="32px" $mark="17px" $pad="3px">
      <PanelTitle>Mojito</PanelTitle>
      <Triangle />
    </PanelHead>
    <PanelBlock $padding="8px 6px 8px 7px">
      <Field $indent="2px">
        Skala
        <Check type="checkbox" defaultChecked />
      </Field>
      <Row $gap="6px">
        <ValueSelect $width="24px" aria-label="Grundton"><option>C</option></ValueSelect>
        <ValueSelect $width="113px" aria-label="Skala"><option>Natürliches Moll</option></ValueSelect>
      </Row>
      <ScaleKeys />
    </PanelBlock>
    <PanelBlock $padding="8px 6px 3px 7px">
      <Row $gap="12px">
        <Field as="span" $indent="2px">Instrument</Field>
        <Row>
          <PairButton $width="21px">m</PairButton>
          <PairButton $width="21px">S</PairButton>
        </Row>
        <KeysIcon color="#858b94" />
      </Row>
      <Field as="span" $indent="2px">Anschlagstärke</Field>
      <Bar $width="144px" $fill="82%" />
      <Field $indent="2px">
        Noten vorhören
        <Check type="checkbox" defaultChecked />
      </Field>
    </PanelBlock>
    <PanelBlock $padding="10px 0 9px 26px">Kein Event ausgewählt</PanelBlock>
  </ScalePanel>
);

const TransportBar = () => (
  <Transport>
    <TransportDisplay>
      <Cell $gap="2px">
        <Svg w={26} h={15} color="#6b7279">
          <circle cx="13" cy="7.500" r="6.500" fill="none" stroke="currentColor" />
          <path d="M0 4l4 3.500L0 11zM26 4l-4 3.500L26 11z" />
          <path d="M9 8h1M10 5h1M13 4h1M16 5h1M17 8h1M11 12h4" stroke="currentColor" strokeWidth="1.500" />
        </Svg>
        <Caption>MIDI</Caption>
      </Cell>
      <Cell $gap="2px">
        <Load $fill="22%" />
        <Load $fill="0%" />
        <Caption>Leistung</Caption>
      </Cell>
      <Svg w={20}>
        <circle cx="10" cy="10" r="8" fill="none" stroke="#50565c" strokeWidth="2.500" strokeDasharray="1.500 2.690" />
      </Svg>
      <Cell $gap="0">
        <Reading>44.1 kHz</Reading>
        <Reading>5.2 ms</Reading>
      </Cell>
      <Cell>
        <Reading>00:00:09.250</Reading>
        <Caption>Sekunden</Caption>
      </Cell>
      <Cell $gap="1px">
        <Reading $size="22px">0005.03.03.00</Reading>
        <Caption>Takte</Caption>
      </Cell>
      <TransportButtons>
        <TransportButton aria-label="Zurück"><Svg w={7} h={11}><path d="M7 0v11L0 5.500z" /></Svg></TransportButton>
        <TransportButton aria-label="Rücklauf"><Svg w={14} h={11}><path d="M7 0v11L0 5.500zM14 0v11L7 5.500z" /></Svg></TransportButton>
        <TransportButton aria-label="Vorlauf"><Svg w={14} h={11}><path d="M0 0v11l7-5.500zM7 0v11l7-5.500z" /></Svg></TransportButton>
        <TransportButton aria-label="Vor"><Svg w={7} h={11}><path d="M0 0v11l7-5.500z" /></Svg></TransportButton>
        <TransportButton $apart aria-label="Anfang">
          <Svg w={9} h={11}><path d="M0 0h2v11H0zM9 0v11L2 5.500z" /></Svg>
        </TransportButton>
      </TransportButtons>
      <TransportButtons>
        <TransportButton $width="32px" $on aria-label="Stopp"><Svg w={14}><path d="M0 0h14v14H0z" /></Svg></TransportButton>
        <TransportButton $width="32px" aria-label="Wiedergabe"><Svg w={12} h={15}><path d="M0 0l12 7.500L0 15z" /></Svg></TransportButton>
        <TransportButton $width="32px" aria-label="Aufnahme"><Svg w={15}><circle cx="7.500" cy="7.500" r="7.500" /></Svg></TransportButton>
        <TransportButton $width="40px" $on aria-label="Loop">
          <Svg w={24} h={14}>
            <path d="M8 12H6.500a5 5 0 0 1 0-10h11a5 5 0 0 1 0 10H14l1.500-6M11 5l-2 7" fill="none" stroke="currentColor" strokeWidth="2.500" />
          </Svg>
        </TransportButton>
      </TransportButtons>
      <Cell $start="1px" $gap="1px">
        <Row $gap="9px"><LocatorMark>L</LocatorMark><Reading>0005.01.01.00</Reading></Row>
        <Row $gap="9px"><LocatorMark>R</LocatorMark><Reading>0007.01.01.00</Reading></Row>
      </Cell>
      <Cell $gap="6px">
        <Svg w={17} h={9} color="#8a9096"><path d="M4 0h1v9H4zM12 0h1v9h-1zM5 3h7v4H5zM0 4h3v1H0zM14 4h3v1h-3z" /></Svg>
        <Svg w={17} h={9} color="#8a9096"><path d="M2 0h1v9H2zM6 0h1v9H6zM8 2h8v5H8zM3 4h3v1H3z" /></Svg>
      </Cell>
      <Cell>
        <Row $gap="8px">
          <Svg w={13} h={14} color="#a7abb0"><path d="M1 3l3 2 2-2-1-3c4 0 4 3 3 5l5 7-2 2-5-7C3 8 1 6 1 3z" /></Svg>
          <Svg w={12} h={13} color="#a7abb0"><path d="M5 2h2l4 10H1L3 7l6 4zM0 2l1-1 8 8-2 1z" /></Svg>
        </Row>
        <Caption>Metronom</Caption>
      </Cell>
      <Cell>
        <Reading>4&nbsp; /&nbsp; 4</Reading>
        <Caption>Taktart</Caption>
      </Cell>
      <Cell>
        <Reading>120.00</Reading>
        <Caption>Tempo</Caption>
      </Cell>
      <Cell $start="14px" $gap="2px">
        <Svg w={86} h={30} shapeRendering="crispEdges">
          <path d="M0 3h67v4H0zM0 9h67v4H0z" fill="#42474c" />
          <path d="M69 3h17v10H69z" fill="#2c1214" />
          <path d="M0 18h49v9H0z" fill="#1f4a66" />
          {Array.from({ length: 34 }, (_, i) => (
            <rect key={i} x={i * 2} y="18" width="1" height="9" fill={i < 25 ? "#62b4e6" : "#3d444a"} />
          ))}
          <circle cx="78" cy="22.500" r="3" fill="none" stroke="#e8230f" strokeWidth="2" shapeRendering="auto" />
        </Svg>
      </Cell>
    </TransportDisplay>
    <Push>
      <ButtonGroup>
        <ViewButton $on $width="45px">Edit</ViewButton>
        <ViewButton $width="45px">Mix</ViewButton>
        <ViewButton $width="59px">Browse</ViewButton>
      </ButtonGroup>
    </Push>
  </Transport>
);

export default function App() {
  return (
    <Window>
      <GlobalStyle />
      <TitleBar>
        <Svg w={16}>
          <rect width="16" height="16" rx="2" fill="#16191c" />
          <path d="M0 11l8-3v5l-8 2zM6 7l5-6 4 1-5 9zM10 12l2-4 3 6h-3z" fill="#b4bbc0" />
        </Svg>
        <WindowTitle>Studio One - Ari-default 2012</WindowTitle>
        <CaptionButtons>
          <CaptionButton aria-label="Minimieren"><Svg w={12} h={8}><path d="M.5 3.500h11v3H.5z" fill="#fff" stroke="#3a4247" /></Svg></CaptionButton>
          <CaptionButton aria-label="Maximieren"><Svg w={12} h={10}><path d="M1.500 1.500h9v7h-9zM4.500 4.500h3v1h-3z" fill="none" stroke="#fff" strokeWidth="2" /></Svg></CaptionButton>
          <CaptionButton $close aria-label="Schließen"><Svg w={12} h={10}><path d="M2 1l8 8M10 1L2 9" stroke="#fff" strokeWidth="3" /></Svg></CaptionButton>
        </CaptionButtons>
      </TitleBar>
      <MenuBar>
        {menus.map((name) => (
          <MenuEntry key={name} $open={name === "Optionen"}>
            <MenuButton $open={name === "Optionen"}>{name}</MenuButton>
            {name === "Optionen" && (
              <>
                <OptionsMenu />
                <Highlight $inset="-7px -4px -4px -5px" />
              </>
            )}
          </MenuEntry>
        ))}
      </MenuBar>
      <MainToolbar />
      <QuantizeToolbar />
      <Body>
        <InspectorPanel />
        <Workspace>
          <Arrange>
            <TrackPanel />
            <Lane><Timeline /></Lane>
            <ScrollColumn>
              <ScrollCap $height="33px" />
              <ScrollCap $height="27px" />
              <ScrollArrow aria-label="Nach oben"><Triangle dir="up" size={7} /></ScrollArrow>
              <VTrack $size="32px" />
              <ScrollArrow aria-label="Nach unten"><Triangle size={7} /></ScrollArrow>
            </ScrollColumn>
          </Arrange>
          <StatusRow>
            <StatusButton $width="51px">MUTE<Led /></StatusButton>
            <StatusButton $width="51px">SOLO<Led /></StatusButton>
            <StatusButton $width="90px" $bold>Klein</StatusButton>
            <HTrack />
            <ScrollArrow aria-label="Nach rechts"><Triangle dir="right" size={7} /></ScrollArrow>
            <Zoom value="42" />
            <RowIcon><LayersIcon /></RowIcon>
          </StatusRow>
          <Grip $soft $line />
          <EditorToolbar />
          <Editor>
            <ScaleSettings />
            <EditorGrid>
              <EditorRow>
                <KeyColumn $line>
                  <ToolButton $on $width="20px" $height="16px" aria-label="Tastatur"><KeysIcon color="#3a6480" /></ToolButton>
                </KeyColumn>
                <DarkStrip />
                <Lane><RollRuler /></Lane>
                <ScrollColumn><ScrollCap $height="33px" /></ScrollColumn>
              </EditorRow>
              <EditorRow>
                <KeyColumn><Keyboard /></KeyColumn>
                <DarkStrip />
                <Lane><PianoRoll /></Lane>
                <ScrollColumn>
                  <ScrollArrow aria-label="Nach oben"><Triangle dir="up" size={7} /></ScrollArrow>
                  <VTrack $size="37px" $offset="60px" />
                  <ScrollArrow aria-label="Nach unten"><Triangle size={7} /></ScrollArrow>
                </ScrollColumn>
              </EditorRow>
              <Tabs>
                <KeyColumn />
                <Tab>...</Tab>
                <Tab>Anschlagstärke</Tab>
                <Tab>Modulation</Tab>
                <Tab $on>Pitch Bend</Tab>
                <Tab>After Touch</Tab>
                <Tab aria-label="Weitere" />
              </Tabs>
              <EditorRow $grow>
                <KeyColumn>
                  <Scale>
                    <span>+100.00</span>
                    <span>0.00</span>
                    <span>-100.00</span>
                  </Scale>
                </KeyColumn>
                <DarkStrip />
                <Lane><Automation /></Lane>
                <ScrollColumn />
              </EditorRow>
              <StatusRow $last>
                <StatusButton $width="19px" $on aria-label="Kurve"><CurveIcon /></StatusButton>
                <StatusButton $width="20px" aria-label="Kurve 2"><CurveIcon /></StatusButton>
                <StatusButton $width="24px" aria-label="Leer" />
                <ScrollArrow aria-label="Nach links"><Triangle dir="left" size={7} /></ScrollArrow>
                <HTrack $offset="22px" $thumb="7px" />
                <ScrollArrow aria-label="Nach rechts"><Triangle dir="right" size={7} /></ScrollArrow>
                <Zoom value="42" />
                <RowIcon><LayersIcon /></RowIcon>
                <ScrollColumn />
              </StatusRow>
            </EditorGrid>
          </Editor>
        </Workspace>
      </Body>
      <TransportBar />
    </Window>
  );
}
